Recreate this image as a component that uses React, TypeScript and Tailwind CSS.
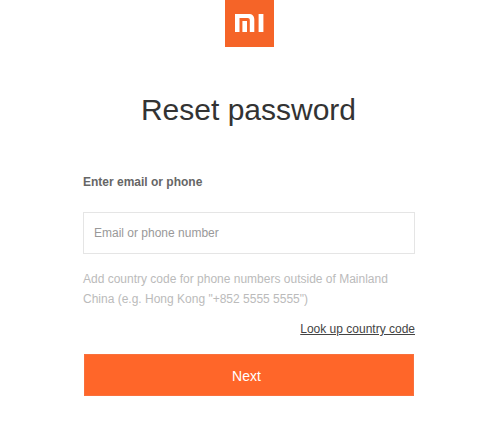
export default function App() {
  return (
    <main className="flex h-[427px] w-[500px] flex-col items-center overflow-hidden bg-white pr-[2px] font-['Liberation_Sans',Arial,sans-serif]">
      <div className="h-[47px] w-[49px] shrink-0 bg-[#f56428]">
        <svg viewBox="0 0 49 47" className="block h-full w-full" role="img" aria-label="Mi">
          <path fill="#fff" d="M10 14h13.500c4 0 5.800 2 5.800 5.500V32h-4.500V20.200c0-1.500-.7-2.300-2.200-2.300H14.500V32H10zM17.400 21h4.600v11h-4.600zM33.600 14h4.800v18h-4.800z" />
        </svg>
      </div>
      <h1 className="mt-[43px] -ml-px text-[30px] leading-10 text-[#333]">Reset password</h1>
      <form className="mt-[42px] flex w-[332px] flex-col" onSubmit={(e) => e.preventDefault()}>
        <label htmlFor="account" className="text-xs leading-5 font-bold text-[#666]">Enter email or phone</label>
        <input id="account" placeholder="Email or phone number" className="mt-5 h-[42px] border border-[#e5e5e5] px-[10px] text-xs text-[#333] placeholder:text-[#999]" />
        <p className="mt-[15px] text-xs leading-5 text-[#bbb]">Add country code for phone numbers outside of Mainland<br />China (e.g. Hong Kong "+852 5555 5555")</p>
        <a href="#" className="mt-[10px] self-end text-xs leading-5 text-[#444] underline">Look up country code</a>
        <button className="mx-px mt-[15px] h-[42px] border border-[#f9703c] bg-[#ff6629] pt-[2px] pr-[5px] text-sm text-white">Next</button>
      </form>
    </main>
  );
}
